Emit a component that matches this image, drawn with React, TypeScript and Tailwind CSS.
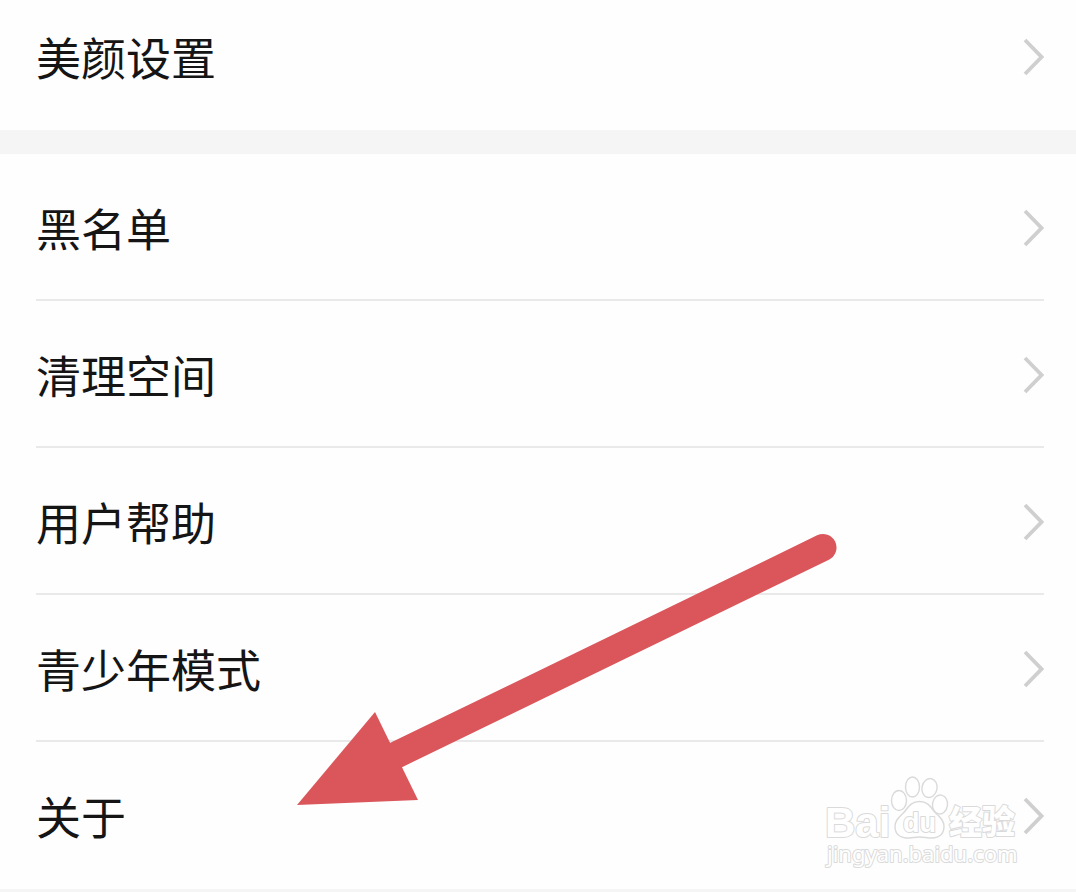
import React from "react";

const privacyItems = ["黑名单", "清理空间", "用户帮助", "青少年模式", "关于"];

function Chevron() {
  return (
    <svg className="h-10 w-6 shrink-0" viewBox="0 0 24 40" fill="none" aria-hidden="true">
      <path d="M5 3 21.5 20 5 37" stroke="#cfcfcf" strokeWidth="3.8" />
    </svg>
  );
}

function RowContent({ label }: { label: string }) {
  return (
    <>
      <span className="leading-[60px]">{label}</span>
      <Chevron />
    </>
  );
}

function Arrow() {
  return (
    <svg
      className="pointer-events-none absolute left-[297px] top-[378px] h-[274px] w-[541px]"
      viewBox="297 532 541 274"
      aria-hidden="true"
    >
      <path d="M823 547.5 388 759" stroke="#da565b" strokeWidth="27" strokeLinecap="round" />
      <path d="M297 805 375 712 418 800Z" fill="#da565b" />
    </svg>
  );
}

function Watermark() {
  return (
    <svg
      className="pointer-events-none absolute bottom-4 right-[50px] h-[104px] w-[206px]"
      viewBox="820 769 206 104"
      role="img"
      aria-label="Baidu 经验"
    >
      <g fill="#ffffff" stroke="#dadada" strokeWidth="1.4">
        <ellipse cx="899" cy="800.5" rx="7.5" ry="10" />
        <ellipse cx="912.5" cy="787" rx="7" ry="10" />
        <ellipse cx="929.5" cy="788" rx="7.5" ry="9.5" transform="rotate(12 929.5 788)" />
        <ellipse cx="940" cy="804.5" rx="7.5" ry="9.5" transform="rotate(8 940 804.5)" />
        <path d="M919.5 801.5c-7 0-10.5 4-14 9-4 5.5-10.5 8-10.5 16 0 7.500 5 11.500 12 11.500 5 0 8-1 12.500-1s7.500 1 12.500 1c7 0 12-4 12-11.500 0-8-6.500-10.500-10.500-16-3.500-5-7-9-14-9Z" />
        <g style={{ paintOrder: "stroke" }} strokeWidth="2" strokeLinejoin="round">
          <text x="825" y="837" fontSize="42" fontWeight="700" fontFamily="'Liberation Sans', sans-serif">Bai</text>
          <text x="903" y="832" fontSize="27" fontWeight="700" fontFamily="'Liberation Sans', sans-serif">du</text>
          <text x="949" y="834" fontSize="33" fontWeight="900" fontFamily="'Noto Sans CJK SC', sans-serif">经验</text>
          <text x="827" y="862" fontSize="22" fontFamily="'Noto Sans', sans-serif">jingyan.baidu.com</text>
        </g>
      </g>
    </svg>
  );
}

export default function App() {
  return (
    <main className="min-h-screen bg-[#f5f5f5] font-['Noto_Sans_CJK_SC',sans-serif] text-[45px] text-[#151515]">
      <section className="bg-[#fefefe]">
        <button type="button" className="flex h-[130px] w-full items-center justify-between pb-4 pl-9 pr-8 text-left">
          <RowContent label="美颜设置" />
        </button>
      </section>
      <section className="relative mt-6 bg-[#fefefe]">
        <ul className="pl-9 pr-8">
          {privacyItems.map((label) => (
            <li key={label} className="h-[147px] border-b-2 border-[#e9e9e9] last:border-transparent">
              <button type="button" className="flex h-full w-full items-center justify-between pt-0.5 text-left">
                <RowContent label={label} />
              </button>
            </li>
          ))}
        </ul>
        <Watermark />
        <Arrow />
      </section>
    </main>
  );
}
